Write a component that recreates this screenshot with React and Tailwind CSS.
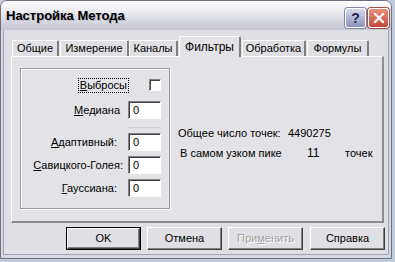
import React from 'react';

var TABS = [
  { label: 'Общие', w: 47, ml: 1 },
  { label: 'Измерение', w: 69, ml: 1 },
  { label: 'Каналы', w: 49, ml: 0 },
  { label: 'Фильтры', w: 62, ml: 1, active: true },
  { label: 'Обработка', w: 64, ml: 1 },
  { label: 'Формулы', w: 62, ml: 1 },
];

function Tab({ tab }) {
  if (tab.active) {
    return (
      <div
        className="relative z-10 -mb-px h-[21px] bg-[#e3e2e6] border-t border-l border-white border-r-2 border-r-[#808080] rounded-t-[2px] flex items-center justify-center"
        style={{ width: tab.w, marginLeft: tab.ml }}
      >
        <span className="text-[12px] text-black">{tab.label}</span>
      </div>
    );
  }
  return (
    <div
      className="h-[16px] bg-[#e0dfe3] border-t border-l border-white border-r-2 border-r-[#808080] rounded-t-[2px] flex items-center justify-center"
      style={{ width: tab.w, marginLeft: tab.ml }}
    >
      <span className="text-[11px] text-black">{tab.label}</span>
    </div>
  );
}

function Field({ label, u, rest, mr }) {
  return (
    <div className="flex items-center justify-end h-[18px]">
      <span className="text-[11px] text-black" style={{ marginRight: mr }}>
        <span className="underline">{u}</span>{rest}
      </span>
      <div className="w-[33px] h-[18px] bg-white border-t border-l border-[#808080] border-r border-b border-r-white border-b-white shadow-[inset_1px_1px_0_#404040] pl-[4px] text-[11px] leading-[16px] text-black">
        0
      </div>
    </div>
  );
}

function Button({ children, def, disabled }) {
  return (
    <div className={'w-[75px] h-[23px] ' + (def ? 'border border-black' : '')}>
      <div className="w-full h-full bg-[#e0dfe3] border-t border-l border-white border-r border-b border-r-[#404040] border-b-[#404040] shadow-[inset_-1px_-1px_0_#808080] flex items-center justify-center">
        {disabled ? (
          <span className="text-[11px] text-[#a0a0a0] [text-shadow:1px_1px_0_#ffffff]">
            При<span className="underline">м</span>енить
          </span>
        ) : (
          <span className="text-[11px] text-black">{children}</span>
        )}
      </div>
    </div>
  );
}

export default function App() {
  return (
    <div className="w-[395px] h-[262px] bg-[#c3ccde] overflow-hidden font-['Liberation_Sans',Arial,sans-serif]">
      <div className="w-[392px] h-[259px] rounded-t-[7px] border border-[#6f6f80] bg-[#d8d8e2] flex flex-col overflow-hidden">
        {/* Заголовок окна */}
        <div className="h-[29px] flex items-center justify-between pl-[5px] pr-[2px] bg-gradient-to-b from-[#ffffff] via-[#e4e4ea] to-[#c4c4d2]">
          <span className="text-[13px] font-bold text-black [text-shadow:1px_1px_0_#b8b8c4] mt-[1px]">Настройка Метода</span>
          <div className="flex items-center gap-[2px] mt-[4px]">
            <div className="w-[21px] h-[20px] rounded-[3px] border border-white bg-gradient-to-b from-[#d8daee] to-[#8e92b8] flex items-center justify-center shadow-[0_0_0_1px_#8088a8]">
              <span className="text-[14px] font-bold text-[#1c2350] leading-none">?</span>
            </div>
            <div className="w-[21px] h-[20px] rounded-[3px] border border-white bg-gradient-to-b from-[#e8907c] to-[#c2443a] flex items-center justify-center shadow-[0_0_0_1px_#a05050]">
              <svg width="12" height="12" viewBox="0 0 12 12">
                <path d="M2 2 L10 10 M10 2 L2 10" stroke="#ffffff" strokeWidth="2.2" strokeLinecap="square" />
              </svg>
            </div>
          </div>
        </div>

        {/* Клиентская область */}
        <div className="flex-1 mx-[2px] mb-[3px] border-l border-r border-b border-[#a2a2b4] bg-[#e0dfe3] pl-[7px] pt-[6px]">
          <div className="w-[373px]">
            <div className="flex items-end h-[20px]">
              {TABS.map(function (t) {
                return <Tab key={t.label} tab={t} />;
              })}
            </div>

            <div className="h-[167px] bg-[#e3e2e6] border-t border-l border-white border-r-2 border-b-2 border-r-[#8c8c90] border-b-[#8c8c90] pl-[8px] pt-[11px] flex">
              {/* Групповая рамка */}
              <div className="w-[150px] h-[141px] border border-[#9d9da1] shadow-[inset_1px_1px_0_#ffffff,1px_1px_0_#ffffff] pt-[8px] pr-[8px] flex flex-col">
                <div className="flex items-center justify-end h-[16px]">
                  <span className="text-[11px] text-black border border-dotted border-black px-[1px] leading-[13px] mr-[20px]">
                    <span className="underline">В</span>ыбросы
                  </span>
                  <div className="w-[12px] h-[12px] bg-white border-t border-l border-[#808080] border-r border-b border-r-white border-b-white shadow-[inset_1px_1px_0_#404040]" />
                </div>
                <div className="mt-[8px]">
                  <Field u="М" rest="едиана" mr={8} />
                </div>
                <div className="mt-[8px] h-px w-[33px] self-end bg-[#d0d0d4]" />
                <div className="mt-[5px]">
                  <Field u="А" rest="даптивный:" mr={11} />
                </div>
                <div className="mt-[5px]">
                  <Field u="С" rest="авицкого-Голея:" mr={5} />
                </div>
                <div className="mt-[5px]">
                  <Field u="Г" rest="ауссиана:" mr={11} />
                </div>
              </div>

              {/* Статистика */}
              <div className="ml-[8px] mt-[55px] flex flex-col text-[11px] text-black">
                <div className="h-[20px] flex items-center">
                  <span className="w-[110px]">Общее число точек:</span>
                  <span>4490275</span>
                </div>
                <div className="h-[20px] flex items-center pl-[2px]">
                  <span className="w-[127px]">В самом узком пике</span>
                  <span className="w-[38px] text-[12px]">11</span>
                  <span>точек</span>
                </div>
              </div>
            </div>
          </div>

          {/* Кнопки */}
          <div className="mt-[4px] ml-[55px] flex gap-[6px]">
            <Button def>OK</Button>
            <Button>Отмена</Button>
            <Button disabled />
            <div className="ml-[1px]">
              <Button>Справка</Button>
            </div>
          </div>
        </div>
      </div>
    </div>
  );
}
